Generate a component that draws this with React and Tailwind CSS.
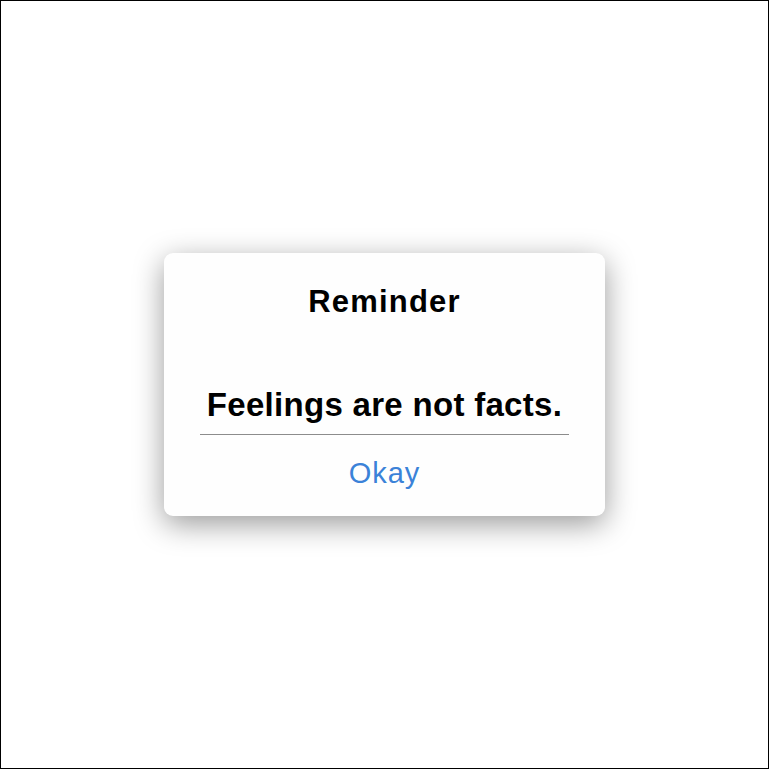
const App = () => {
  return (
    <div className="flex h-[769px] w-[769px] items-center justify-center border border-black bg-white font-['Liberation_Sans',Arial,sans-serif]">
      <div className="flex h-[263px] w-[441px] flex-col rounded-[9px] bg-[#fefefe] shadow-[0_8px_30px_rgba(0,0,0,0.4)]">
        <h2 className="mt-[31px] text-center text-[31px] font-bold leading-[36px] tracking-[1.2px] text-black">
          Reminder
        </h2>
        <p className="mt-[65px] text-center text-[33px] font-bold leading-[40px] tracking-[0.3px] text-black">
          Feelings are not facts.
        </p>
        <div className="mx-[36px] mt-[9px] h-px bg-[#8c8c8c]" />
        <button className="mt-[18px] text-center text-[29px] leading-[40px] tracking-[1px] text-[#3b82d8]">
          Okay
        </button>
      </div>
    </div>
  );
};

export default App;
